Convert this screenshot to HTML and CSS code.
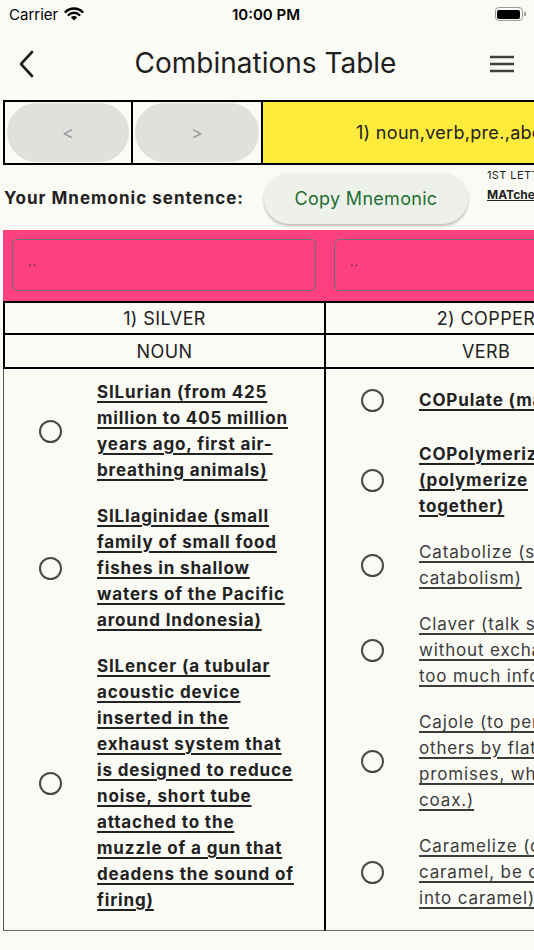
FILE: index.html
```html
<!DOCTYPE html>
<html lang="en">
<head>
  <meta charset="UTF-8" />
  <meta name="viewport" content="width=device-width, initial-scale=1.0"/>
  <title>Combinations Table</title>
  <link rel="stylesheet" href="styles.css">
</head>
<body>

  <div class="status-bar">
    <span class="carrier">Carrier
      <svg class="wifi" width="20" height="14" viewBox="0 0 20 14">
        <path d="M10 13.5 L6.8 10.2 A4.6 4.6 0 0 1 13.2 10.2 Z" fill="#000"/>
        <path d="M4.6 8 A7.7 7.7 0 0 1 15.4 8" stroke="#000" stroke-width="2.4" fill="none" stroke-linecap="round"/>
        <path d="M1.6 4.9 A12 12 0 0 1 18.4 4.9" stroke="#000" stroke-width="2.4" fill="none" stroke-linecap="round"/>
      </svg>
    </span>
    <span class="time">10:00 PM</span>
    <span class="battery"><span class="battery-fill"></span></span>
  </div>

  <div class="app-bar">
    <svg class="back" width="24" height="30" viewBox="0 0 24 30">
      <path d="M15 3 L4 15 L15 27" stroke="#1f1f1f" stroke-width="2.6" fill="none" stroke-linecap="round" stroke-linejoin="round"/>
    </svg>
    <h1 class="title">Combinations Table</h1>
    <svg class="menu" width="24" height="18" viewBox="0 0 24 18">
      <path d="M0 2 H24 M0 9 H24 M0 16 H24" stroke="#404040" stroke-width="2.6"/>
    </svg>
  </div>

  <div class="nav-row">
    <div class="nav-cell"><button class="pill">&lt;</button></div>
    <div class="nav-cell"><button class="pill">&gt;</button></div>
    <div class="nav-cell combo">1) noun,verb,pre.,abc.,adj.</div>
  </div>

  <div class="mnemonic-row">
    <span class="mnemonic-label">Your Mnemonic sentence:</span>
    <button class="copy-btn">Copy Mnemonic</button>
    <div class="letters">
      <span class="letters-cap">1ST LETTERS</span>
      <span class="letters-match">MATched</span>
    </div>
  </div>

  <div class="pink-row">
    <div class="field">..</div>
    <div class="field">..</div>
  </div>

  <div class="table">
    <div class="head-cell top">1) SILVER</div>
    <div class="head-cell top">2) COPPER</div>
    <div class="head-cell">NOUN</div>
    <div class="head-cell">VERB</div>

    <div class="col">
      <div class="item">
        <span class="radio"></span>
        <span class="word strong">SILurian (from 425 million to 405 million years ago, first air-breathing animals)</span>
      </div>
      <div class="item">
        <span class="radio"></span>
        <span class="word strong">SILlaginidae (small family of small food fishes in shallow waters of the Pacific around Indonesia)</span>
      </div>
      <div class="item">
        <span class="radio"></span>
        <span class="word strong">SILencer (a tubular acoustic device inserted in the exhaust system that is designed to reduce noise, short tube attached to the muzzle of a gun that deadens the sound of firing)</span>
      </div>
    </div>

    <div class="col">
      <div class="item">
        <span class="radio"></span>
        <span class="word strong">COPulate (make love)</span>
      </div>
      <div class="item">
        <span class="radio"></span>
        <span class="word strong">COPolymerize (polymerize together)</span>
      </div>
      <div class="item">
        <span class="radio"></span>
        <span class="word">Catabolize (subject to catabolism)</span>
      </div>
      <div class="item">
        <span class="radio"></span>
        <span class="word">Claver (talk socially without exchanging too much information)</span>
      </div>
      <div class="item">
        <span class="radio"></span>
        <span class="word">Cajole (to persuade others by flattery or promises, wheedle, coax.)</span>
      </div>
      <div class="item">
        <span class="radio"></span>
        <span class="word">Caramelize (cook to caramel, be changed into caramel)</span>
      </div>
    </div>
  </div>

</body>
</html>
```

FILE: styles.css
```css
* { margin: 0; padding: 0; box-sizing: border-box; }
body {
  width: 534px;
  height: 950px;
  font-family: Inter, "Noto Sans", sans-serif;
  background: #fbfbf6;
  color: #1f1f1f;
  overflow: hidden;
}
.status-bar {
  height: 28px;
  display: flex;
  justify-content: space-between;
  align-items: center;
  padding: 0 10px 0 9px;
  font-size: 15px;
  color: #000;
}
.carrier {
  display: flex;
  align-items: center;
  gap: 6px;
  width: 110px;
}
.time {
  font-weight: 600;
}
.battery {
  width: 28px;
  height: 14px;
  border: 1.5px solid #9a9a9a;
  border-radius: 4px;
  padding: 1.5px;
  margin: 0 1px 0 82px;
  position: relative;
  display: flex;
}
.battery::after {
  content: "";
  position: absolute;
  right: -4px;
  top: 3.5px;
  width: 2px;
  height: 4px;
  background: #9a9a9a;
  border-radius: 0 1px 1px 0;
}
.battery-fill {
  flex: 1;
  background: #000;
  border-radius: 2px;
}

.app-bar {
  height: 72px;
  display: flex;
  align-items: center;
  justify-content: space-between;
  padding: 0 20px 0 17px;
}
.title {
  font-size: 28px;
  font-weight: 400;
  color: #1f1f1f;
  margin-top: -2px;
}

.nav-row {
  margin-left: 3px;
  height: 65px;
  display: flex;
  border: 2px solid #000;
  border-right: none;
  width: 560px;
}
.nav-cell {
  width: 128px;
  border-right: 2px solid #000;
  display: flex;
  padding: 1px 2px;
  flex-shrink: 0;
}
.nav-cell + .nav-cell { width: 130px; }
.pill {
  flex: 1;
  border: none;
  border-radius: 32px;
  background: #e0e1dc;
  color: #9b9b9b;
  font-family: Inter, sans-serif;
  font-size: 18px;
}
.nav-cell.combo {
  flex: 1;
  border-right: none;
  background: #ffeb3b;
  align-items: center;
  padding-left: 93px;
  font-size: 18px;
  letter-spacing: 0.3px;
  white-space: nowrap;
  color: #222;
}

.mnemonic-row {
  height: 65px;
  display: flex;
  align-items: center;
  padding-left: 4px;
}
.mnemonic-label {
  flex-shrink: 0;
  font-size: 17px;
  font-weight: 700;
  letter-spacing: 1px;
  color: #222;
  width: 260px;
  margin-top: 1px;
}
.copy-btn {
  flex-shrink: 0;
  width: 204px;
  height: 51px;
  border: none;
  border-radius: 26px;
  background: #eef0ea;
  box-shadow: 0 2px 3px rgba(0, 0, 0, 0.25);
  color: #1e6f33;
  font-family: Inter, sans-serif;
  font-size: 18px;
  letter-spacing: 0.3px;
  margin-top: 2px;
}
.letters {
  flex-shrink: 0;
  display: flex;
  flex-direction: column;
  margin-left: 19px;
  align-self: flex-start;
  padding-top: 3px;
  white-space: nowrap;
  color: #222;
}
.letters-cap {
  font-size: 11px;
  letter-spacing: 0.4px;
}
.letters-match {
  font-size: 12px;
  font-weight: 700;
  text-decoration: underline;
  margin-top: 5px;
}

.pink-row {
  margin-left: 3px;
  height: 71px;
  background: #ff4081;
  display: flex;
  gap: 18px;
  padding: 9px 0 0 9px;
  width: 700px;
}
.field {
  flex-shrink: 0;
  width: 304px;
  height: 52px;
  border: 1.5px solid #6f6f6f;
  border-radius: 5px;
  padding: 14px 0 0 15px;
  font-size: 12px;
  color: #333;
  letter-spacing: 1px;
}

.table {
  margin-left: 3px;
  display: grid;
  grid-template-columns: 321px 322px;
  width: 643px;
}
.head-cell {
  height: 34px;
  border-left: 2px solid #000;
  border-bottom: 2px solid #000;
  display: flex;
  align-items: center;
  justify-content: center;
  font-size: 18px;
  letter-spacing: 0.4px;
  color: #222;
}
.head-cell.top {
  border-top: 2px solid #000;
}
.col {
  border-left: 1px solid #555;
  border-bottom: 1px solid #666;
  padding: 10px 30px 17px 0;
  display: flex;
  flex-direction: column;
  gap: 20px;
}
.col + .col {
  border-left: 2px solid #000;
}
.item {
  display: grid;
  grid-template-columns: 93px 1fr;
  align-items: center;
  min-height: 42px;
}
.radio {
  justify-self: center;
  width: 23px;
  height: 23px;
  border: 2.5px solid #444a45;
  border-radius: 50%;
}
.word {
  font-size: 17px;
  line-height: 26px;
  letter-spacing: 0.85px;
  color: #3c3c3c;
  text-decoration: underline;
  text-decoration-thickness: 1.5px;
  text-underline-offset: 3px;
}
.word.strong {
  font-weight: 700;
  color: #222;
}
```
